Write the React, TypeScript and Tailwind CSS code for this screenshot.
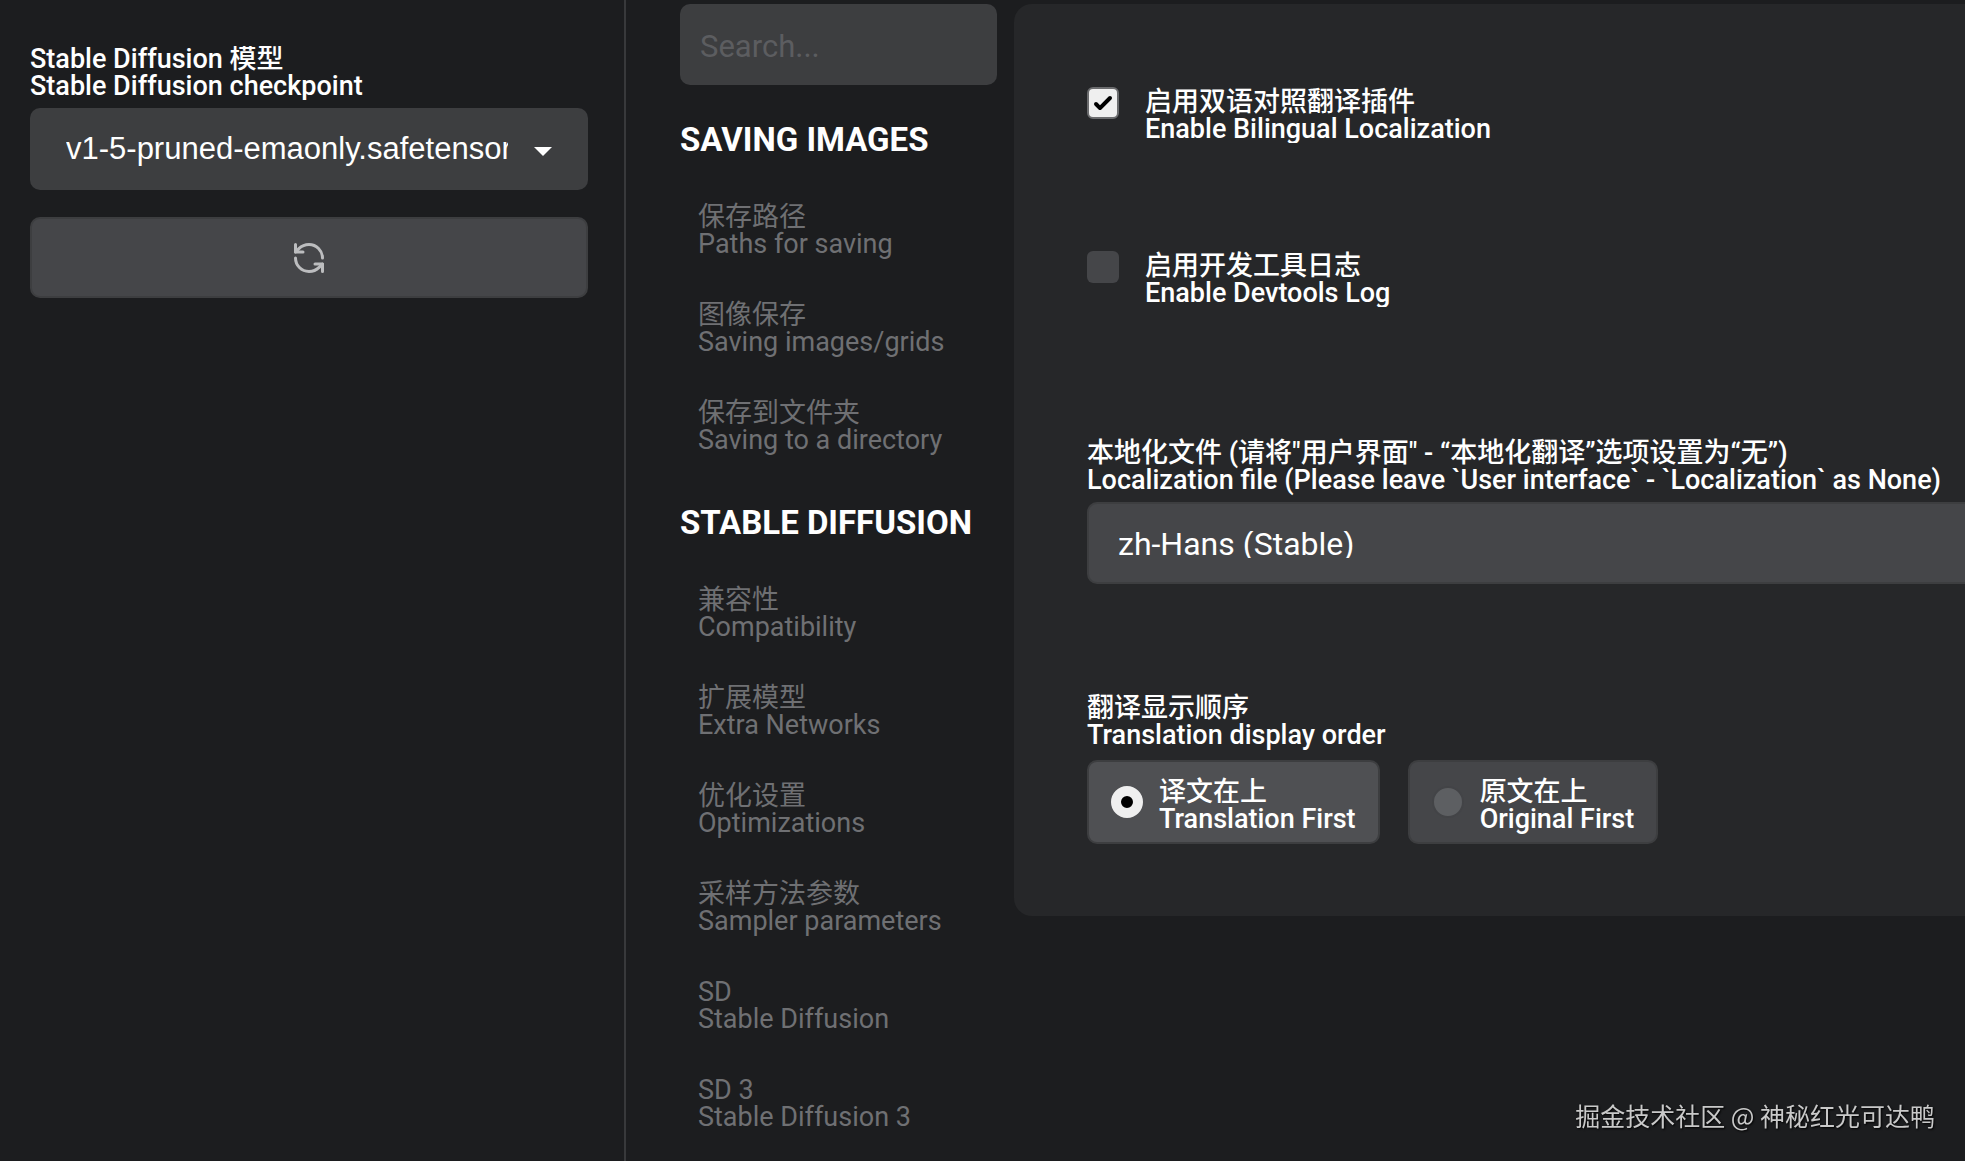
import { useState } from "react";
import { RefreshCcw } from "lucide-react";

/**
 * A label shown in two languages, one line each.
 */
interface BilingualText {
  zh: string;
  en: string;
}

interface NavGroup {
  title: string;
  items: BilingualText[];
}

const NAV_GROUPS: NavGroup[] = [
  {
    title: "Saving images",
    items: [
      { zh: "保存路径", en: "Paths for saving" },
      { zh: "图像保存", en: "Saving images/grids" },
      { zh: "保存到文件夹", en: "Saving to a directory" },
    ],
  },
  {
    title: "Stable Diffusion",
    items: [
      { zh: "兼容性", en: "Compatibility" },
      { zh: "扩展模型", en: "Extra Networks" },
      { zh: "优化设置", en: "Optimizations" },
      { zh: "采样方法参数", en: "Sampler parameters" },
      { zh: "SD", en: "Stable Diffusion" },
      { zh: "SD 3", en: "Stable Diffusion 3" },
    ],
  },
];

const ORDER_OPTIONS = [
  { value: "translation", zh: "译文在上", en: "Translation First" },
  { value: "original", zh: "原文在上", en: "Original First" },
];

function Bilingual({ zh, en }: BilingualText) {
  return (
    <>
      <span className="block">{zh}</span>
      <span className="block">{en}</span>
    </>
  );
}

function CheckpointPanel() {
  return (
    <aside className="w-[626px] shrink-0 border-r-2 border-[#38393b] pt-[46px] pr-9 pl-[30px]">
      <label htmlFor="checkpoint" className="block overflow-hidden text-[27px] leading-[27px] font-medium">
        <Bilingual zh="Stable Diffusion 模型" en="Stable Diffusion checkpoint" />
      </label>
      <div className="relative mt-2">
        <select
          id="checkpoint"
          className="h-[82px] w-full appearance-none rounded-[10px] bg-[#3d3e40] pr-20 pl-9 font-['Liberation_Sans',Arial,sans-serif] text-[31px] text-clip"
        >
          <option>v1-5-pruned-emaonly.safetensors [6ce0161689]</option>
        </select>
        <svg className="pointer-events-none absolute top-[39px] right-9 h-[9px] w-[18px]" viewBox="0 0 18 9" fill="currentColor">
          <path d="M0 0h18L9 9z" />
        </svg>
      </div>
      <button
        type="button"
        aria-label="Refresh checkpoints"
        className="mt-[27px] flex h-[81px] w-full items-center justify-center rounded-[10px] border-2 border-[#3d3e40] bg-[#454649] text-[#bcbdbf]"
      >
        <RefreshCcw size={36} strokeWidth={2} />
      </button>
    </aside>
  );
}

function SettingsNav() {
  return (
    <nav className="w-[317px] shrink-0">
      <input
        type="search"
        aria-label="Search settings"
        placeholder="Search..."
        className="mb-[15px] h-[81px] w-full rounded-[10px] bg-[#3d3e40] px-5 pt-1 text-[31px] placeholder:text-[#5c5d60]"
      />
      {NAV_GROUPS.map((group) => (
        <section key={group.title}>
          <h2 className="pt-5 pb-[22px] text-[33px] leading-10 font-bold whitespace-nowrap uppercase">{group.title}</h2>
          <ul className="flex flex-col pb-[7px]">
            {group.items.map((item) => (
              <li key={item.en}>
                <button
                  type="button"
                  className="w-full px-[18px] py-[22px] text-left text-[27px] leading-[27px] whitespace-nowrap text-[#6f7073]"
                >
                  <Bilingual {...item} />
                </button>
              </li>
            ))}
          </ul>
        </section>
      ))}
    </nav>
  );
}

function CheckOption({ id, zh, en, initial }: BilingualText & { id: string; initial: boolean }) {
  const [checked, setChecked] = useState(initial);

  return (
    <div className="flex items-start gap-[26px]">
      <span className="relative size-8 shrink-0">
        <input
          id={id}
          type="checkbox"
          checked={checked}
          onChange={(e) => setChecked(e.target.checked)}
          className="block size-8 appearance-none rounded-md bg-[#454649] checked:border-2 checked:border-[#6b6c6e] checked:bg-[#efefef]"
        />
        {checked && (
          <svg className="pointer-events-none absolute inset-0 size-8 text-black" viewBox="0 0 16 16" fill="currentColor">
            <path d="M12.207 4.793a1 1 0 0 1 0 1.414l-5 5a1 1 0 0 1-1.414 0l-2-2a1 1 0 0 1 1.414-1.414L6.5 9.086l4.293-4.293a1 1 0 0 1 1.414 0z" />
          </svg>
        )}
      </span>
      <label htmlFor={id} className="block overflow-hidden pt-0.5 font-medium">
        <Bilingual zh={zh} en={en} />
      </label>
    </div>
  );
}

function LocalizationSettings() {
  const [order, setOrder] = useState("translation");

  return (
    <main className="min-w-0 flex-1 self-start rounded-l-[18px] bg-[#262729] pt-[83px] pb-[72px] pl-[73px] text-[27px] leading-[27px] whitespace-nowrap">
      <div className="flex flex-col gap-[108px]">
        <CheckOption id="enabled" zh="启用双语对照翻译插件" en="Enable Bilingual Localization" initial={true} />
        <CheckOption id="devtools" zh="启用开发工具日志" en="Enable Devtools Log" initial={false} />
      </div>

      <div className="mt-[133px]">
        <label htmlFor="localization-file" className="block font-medium">
          <Bilingual
            zh={'本地化文件 (请将"用户界面" - “本地化翻译”选项设置为“无”)'}
            en="Localization file (Please leave `User interface` - `Localization` as None)"
          />
        </label>
        <select
          id="localization-file"
          className="mt-2 h-[82px] w-full appearance-none rounded-l-[10px] border-2 border-r-0 border-[#3d3e40] bg-[#454649] px-[29px] pt-0.5 text-[32px]"
        >
          <option>zh-Hans (Stable)</option>
        </select>
      </div>

      <fieldset className="mt-[111px]">
        <legend className="font-medium">
          <Bilingual zh="翻译显示顺序" en="Translation display order" />
        </legend>
        <div className="mt-[11px] flex gap-7">
          {ORDER_OPTIONS.map((option) => (
            <label
              key={option.value}
              className="flex h-[84px] items-center gap-4 rounded-[10px] border-2 border-[#3d3e40] bg-[#454649] px-[22px] has-checked:bg-[#4f5053]"
            >
              <input
                type="radio"
                name="order"
                value={option.value}
                checked={order === option.value}
                onChange={() => setOrder(option.value)}
                className="size-8 appearance-none rounded-full border-2 border-[#434447] bg-[#5d5f62] checked:border-10 checked:border-[#efefef] checked:bg-black"
              />
              <span className="pt-2 font-medium">
                <Bilingual zh={option.zh} en={option.en} />
              </span>
            </label>
          ))}
        </div>
      </fieldset>
    </main>
  );
}

export default function App() {
  return (
    <div className="flex min-h-screen overflow-hidden bg-[#1c1d1f] font-[Roboto,'Noto_Sans_CJK_SC',sans-serif] text-white">
      <CheckpointPanel />
      <div className="flex min-w-0 flex-1 gap-[17px] pt-1 pl-[54px]">
        <SettingsNav />
        <LocalizationSettings />
      </div>
      <p className="fixed right-[30px] bottom-7 font-['Noto_Sans_CJK_SC',sans-serif] text-[25px] leading-9 text-[#c9c9c9] text-shadow-[1px_1px_2px_#000]">
        掘金技术社区 @ 神秘红光可达鸭
      </p>
    </div>
  );
}
